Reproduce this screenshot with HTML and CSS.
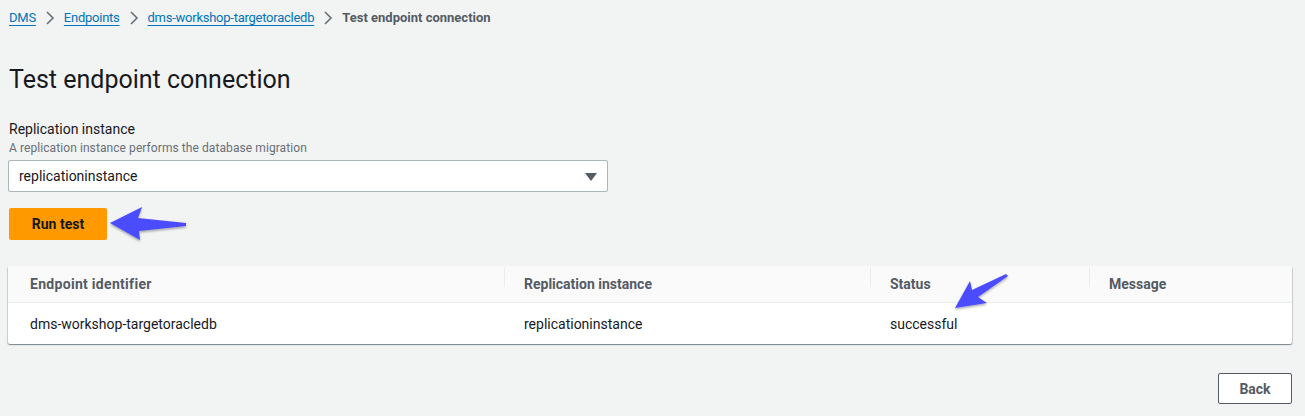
FILE: index.html
```html
<!DOCTYPE html>
<html lang="en">
<head>
<meta charset="utf-8">
<title>Test endpoint connection</title>
<link rel="stylesheet" href="styles.css">
</head>
<body>
<div class="page">
  <nav class="crumbs">
    <a class="crumb-link" href="#">DMS</a>
    <svg class="chev" width="16" height="16" viewBox="0 0 16 16"><polyline points="5,2 11,8 5,14" fill="none" stroke="#687078" stroke-width="1.6"/></svg>
    <a class="crumb-link" href="#">Endpoints</a>
    <svg class="chev" width="16" height="16" viewBox="0 0 16 16"><polyline points="5,2 11,8 5,14" fill="none" stroke="#687078" stroke-width="1.6"/></svg>
    <a class="crumb-link" href="#">dms-workshop-targetoracledb</a>
    <svg class="chev" width="16" height="16" viewBox="0 0 16 16"><polyline points="5,2 11,8 5,14" fill="none" stroke="#687078" stroke-width="1.6"/></svg>
    <span class="crumb-current">Test endpoint connection</span>
  </nav>

  <h1 class="title">Test endpoint connection</h1>

  <div class="field">
    <div class="label">Replication instance</div>
    <div class="desc">A replication instance performs the database migration</div>
    <div class="select">
      <span class="select-value">replicationinstance</span>
      <svg class="caret" width="12" height="8" viewBox="0 0 12 8"><polygon points="0,0 12,0 6,8" fill="#545b64"/></svg>
    </div>
  </div>

  <div class="run-row">
    <button class="btn-primary">Run test</button>
  </div>

  <div class="table">
    <div class="row head">
      <div class="cell first">Endpoint identifier</div>
      <div class="cell div">Replication instance</div>
      <div class="cell div">Status</div>
      <div class="cell div">Message</div>
    </div>
    <div class="row body">
      <div class="cell first">dms-workshop-targetoracledb</div>
      <div class="cell">replicationinstance</div>
      <div class="cell">successful</div>
      <div class="cell"></div>
    </div>
  </div>

  <div class="actions">
    <button class="btn-normal">Back</button>
  </div>

  <svg class="arrow arrow-run" width="90" height="40" viewBox="0 0 90 40">
    <defs>
      <filter id="sh1" x="-20%" y="-20%" width="140%" height="160%">
        <feDropShadow dx="0" dy="1.5" stdDeviation="1.2" flood-color="#000" flood-opacity="0.35"/>
      </filter>
    </defs>
    <polygon filter="url(#sh1)" fill="#4b4bff" points="2,18 34,2 30,13 78,18 78,21 31,26 32,35"/>
  </svg>

  <svg class="arrow arrow-status" width="70" height="45" viewBox="0 0 70 45">
    <defs>
      <filter id="sh2" x="-20%" y="-20%" width="140%" height="160%">
        <feDropShadow dx="0" dy="1.5" stdDeviation="1.2" flood-color="#000" flood-opacity="0.35"/>
      </filter>
    </defs>
    <polygon filter="url(#sh2)" fill="#4b4bff" points="5,38 20,11 22,20 56,4 58,6 28,27 37,33"/>
  </svg>
</div>
</body>
</html>
```

FILE: styles.css
```css
* { box-sizing: border-box; }
html, body { margin: 0; padding: 0; }
body {
  background: #f2f3f3;
  font-family: Roboto, "Liberation Sans", Arial, sans-serif;
  color: #16191f;
  width: 1305px;
  height: 416px;
  overflow: hidden;
}
.page {
  position: relative;
  padding: 8px 13px 0 8px;
}
.crumbs {
  display: flex;
  align-items: center;
  height: 20px;
  font-size: 13px;
  line-height: 20px;
  padding-left: 1px;
}
.crumb-link {
  color: #0073bb;
  text-decoration: underline;
  text-underline-offset: 3px;
  letter-spacing: -0.25px;
}
.chev { margin: 0 6px 0 6px; }
.crumb-current { color: #545b64; font-weight: 700; }

.title {
  margin: 34px 0 0 1px;
  font-size: 25px;
  line-height: 36px;
  font-weight: 400;
  color: #16191f;
}

.field { margin-top: 21px; padding-left: 1px; }
.label { font-size: 14px; line-height: 20px; color: #16191f; }
.desc { margin-top: 1px; font-size: 12px; line-height: 16px; color: #687078; letter-spacing: 0.08px; }
.select {
  margin: 4px 0 0 -1px;
  width: 600px;
  height: 32px;
  background: #fff;
  border: 1px solid #aab7b8;
  border-radius: 2px;
  display: flex;
  align-items: center;
  justify-content: space-between;
  padding: 0 10px 0 10px;
  font-size: 14px;
}
.caret { margin-top: 1px; }

.run-row { margin-top: 16px; padding-left: 1px; }
.btn-primary {
  width: 98px;
  height: 32px;
  border: none;
  border-radius: 2px;
  background: #ff9900;
  color: #16191f;
  font-family: inherit;
  font-size: 14px;
  font-weight: 700;
}

.table {
  margin-top: 26px;
  width: 1284px;
  background: #fff;
  border-radius: 2px;
  box-shadow: 0 1px 1px rgba(0,28,36,0.3), 1px 1px 1px rgba(0,28,36,0.15), -1px 1px 1px rgba(0,28,36,0.15);
}
.row {
  display: grid;
  grid-template-columns: 496px 366px 219px 1fr;
  align-items: center;
  font-size: 14px;
}
.row.head {
  height: 37px;
  background: #fafafa;
  border-bottom: 1px solid #eaeded;
  color: #545b64;
  font-weight: 700;
  border-radius: 2px 2px 0 0;
}
.row.head .cell.first { letter-spacing: 0.3px; }
.row.body { height: 41px; color: #16191f; }
.cell { padding-left: 20px; position: relative; }
.cell.first { padding-left: 22px; }
.cell.div::before {
  content: "";
  position: absolute;
  left: 0;
  top: -9px;
  width: 1px;
  height: 20px;
  background: #eaeded;
}

.actions {
  margin-top: 29px;
  display: flex;
  justify-content: flex-end;
}
.btn-normal {
  width: 74px;
  height: 31px;
  background: #fff;
  border: 1px solid #545b64;
  border-radius: 2px;
  color: #545b64;
  font-family: inherit;
  font-size: 14px;
  font-weight: 700;
}

.arrow { position: absolute; }
.arrow-run { left: 108px; top: 205px; }
.arrow-status { left: 950px; top: 270px; }
```
